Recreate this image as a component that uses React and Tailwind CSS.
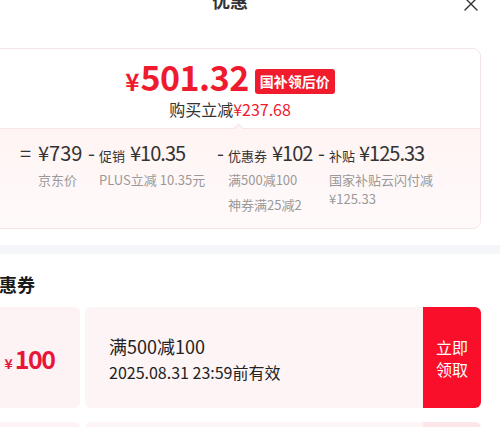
import React from "react";

function Coupon({ faded }) {
  return (
    <div className="mx-[19px] flex h-[101px]">
      <div className="w-[101px] rounded-[6px] bg-[#fdf2f4] flex items-center justify-center">
        <span className="text-[#e8173a] font-bold text-[25px] leading-[30px] tracking-[-1.5px]">
          <span className="text-[14px] leading-none tracking-normal mr-[2px]">¥</span>100
        </span>
      </div>
      <div className="ml-[5px] flex-1 rounded-l-[6px] bg-[#fdf4f5] flex flex-col justify-center pl-[24px]">
        <div className="text-[18px] leading-[24px] text-[#222]">满500减100</div>
        <div className="mt-[4px] text-[16px] leading-[20px] text-[#222]">2025.08.31 23:59前有效</div>
      </div>
      <div
        className={
          "w-[58px] rounded-r-[6px] flex flex-col items-center justify-center text-white text-[16px] leading-[22px] " +
          (faded ? "bg-[#fde6e9]" : "bg-[#fa0f2a]")
        }
      >
        <span>立即</span>
        <span>领取</span>
      </div>
    </div>
  );
}

export default function App() {
  return (
    <div className="w-[500px] h-[427px] overflow-hidden bg-white font-['Noto_Sans_CJK_SC',sans-serif]">
      <div className="ml-[-40px] w-[540px] mt-[-12px]">
        {/* header */}
        <div className="relative h-[24px] flex justify-center">
          <span className="text-[18px] leading-[24px] font-bold text-[#333]">优惠</span>
          <svg
            className="absolute right-[22px] top-[9px]"
            width="14"
            height="14"
            viewBox="0 0 14 14"
            fill="none"
            stroke="#333"
            strokeWidth="1.4"
            strokeLinecap="round"
          >
            <path d="M1 1 L13 13 M13 1 L1 13" />
          </svg>
        </div>

        {/* summary card */}
        <div className="mt-[36px] mx-[19px] border border-[#f2e6e8] rounded-[8px] overflow-hidden">
          <div className="pt-[8px] pb-[9px] flex flex-col items-center bg-white">
            <div className="flex items-start h-[40px]">
              <span className="block h-[40px] text-[34px] leading-[40px] text-[#ee1b2e] font-bold tracking-[-0.5px]">
                <span className="text-[24px] leading-none tracking-normal mr-[1px]">¥</span>501.32
              </span>
              <span className="ml-[6px] mt-[12px] h-[25px] leading-[25px] px-[5px] rounded-[3px] bg-[#f01b2c] text-white text-[14px] font-bold">
                国补领后价
              </span>
            </div>
            <div className="mt-[2px] h-[20px] text-[16px] leading-[20px] text-[#333]">
              购买立减<span className="text-[#ee1b2e]">¥237.68</span>
            </div>
          </div>
          <div className="relative border-t border-[#f6e4e6] bg-gradient-to-b from-[#fff4f4] to-[#fffafa] pl-[40px] pt-[11px] pb-[14px]">
            <div className="absolute left-[255px] top-[-4px] w-[7px] h-[7px] rotate-45 bg-[#fff4f4] border-l border-t border-[#f6e4e6]" />
            <div className="flex items-start text-[#333]">
              <span className="w-[18px] text-[20px] leading-[26px]">=</span>
              <div className="w-[50px]">
                <div className="h-[26px] text-[20px] leading-[26px]">¥739</div>
                <div className="mt-[4px] text-[13px] leading-[19px] text-[#999]">京东价</div>
              </div>
              <span className="w-[11px] text-[20px] leading-[26px]">-</span>
              <div className="w-[118px]">
                <div className="h-[26px] text-[20px] leading-[26px] whitespace-nowrap tracking-[-1px]">
                  <span className="text-[13px] leading-none tracking-normal mr-[5px]">促销</span>¥10.35
                </div>
                <div className="mt-[4px] text-[13px] leading-[19px] text-[#999] whitespace-nowrap">PLUS立减 10.35元</div>
              </div>
              <span className="w-[11px] text-[20px] leading-[26px]">-</span>
              <div className="w-[90px]">
                <div className="h-[26px] text-[20px] leading-[26px] whitespace-nowrap tracking-[-1px]">
                  <span className="text-[13px] leading-none tracking-normal mr-[5px]">优惠券</span>¥102
                </div>
                <div className="mt-[4px] text-[13px] leading-[19px] text-[#999] whitespace-nowrap">满500减100</div>
                <div className="mt-[6px] text-[13px] leading-[19px] text-[#999] whitespace-nowrap">神券满25减2</div>
              </div>
              <span className="w-[11px] text-[20px] leading-[26px]">-</span>
              <div className="w-[120px]">
                <div className="h-[26px] text-[20px] leading-[26px] whitespace-nowrap tracking-[-1px]">
                  <span className="text-[13px] leading-none tracking-normal mr-[4px]">补贴</span>¥125.33
                </div>
                <div className="mt-[4px] text-[13px] leading-[19px] text-[#999] whitespace-nowrap">国家补贴云闪付减</div>
                <div className="text-[13px] leading-[19px] text-[#999] whitespace-nowrap">¥125.33</div>
              </div>
            </div>
          </div>
        </div>

        {/* separator band */}
        <div className="mt-[16px] h-[9px] bg-[#f5f6f9]" />

        {/* coupons */}
        <div className="mt-[18px] pl-[21px] h-[24px] text-[18px] leading-[24px] font-bold text-[#1a1a1a]">优惠券</div>
        <div className="mt-[11px]">
          <Coupon />
        </div>
        <div className="mt-[14px]">
          <Coupon faded />
        </div>
      </div>
    </div>
  );
}
